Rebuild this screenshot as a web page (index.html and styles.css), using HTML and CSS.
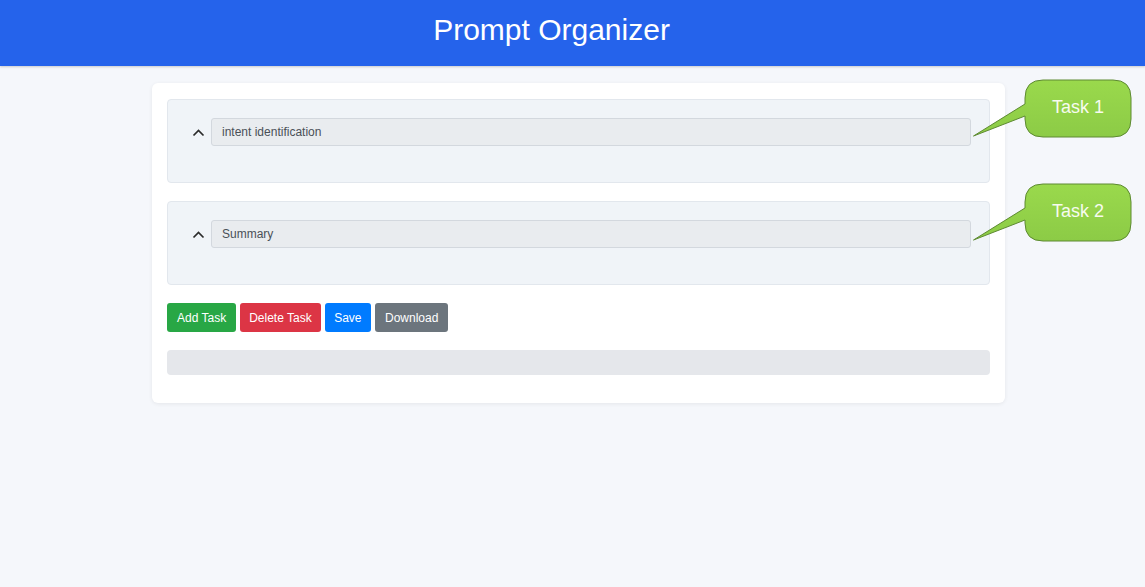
FILE: index.html
```html
<!DOCTYPE html>
<html>
<head>
<meta charset="utf-8">
<link rel="stylesheet" href="styles.css">
</head>
<body>
<header class="topbar"><h1 class="title">Prompt Organizer</h1></header>
<main class="page">
  <section class="card">
    <div class="task">
      <div class="task-head">
        <svg class="chev" width="13" height="9" viewBox="0 0 13 9"><polyline points="1.5,7.5 6.5,2.5 11.5,7.5" fill="none" stroke="#2b2b2b" stroke-width="1.7"/></svg>
        <div class="task-input">intent identification</div>
      </div>
    </div>
    <div class="task">
      <div class="task-head">
        <svg class="chev" width="13" height="9" viewBox="0 0 13 9"><polyline points="1.5,7.5 6.5,2.5 11.5,7.5" fill="none" stroke="#2b2b2b" stroke-width="1.7"/></svg>
        <div class="task-input">Summary</div>
      </div>
    </div>
    <div class="actions">
      <button class="btn btn-green">Add Task</button>
      <button class="btn btn-red">Delete Task</button>
      <button class="btn btn-blue">Save</button>
      <button class="btn btn-gray">Download</button>
    </div>
    <div class="output"></div>
  </section>
</main>
<div class="callout callout-1">
  <svg width="166" height="64" viewBox="0 0 166 64">
    <defs><linearGradient id="g1" x1="0" y1="0" x2="0" y2="1"><stop offset="0" stop-color="#9ad94c"/><stop offset="1" stop-color="#8ccb46"/></linearGradient></defs>
    <path d="M73 2 H143 Q161 2 161 20 V41 Q161 59 143 59 H73 Q55 59 55 41 V38 L3.5 58 L55 26 V20 Q55 2 73 2 Z" fill="url(#g1)" stroke="#5e8a33" stroke-width="1"/>
  </svg>
  <span class="callout-text">Task 1</span>
</div>
<div class="callout callout-2">
  <svg width="166" height="64" viewBox="0 0 166 64">
    <defs><linearGradient id="g2" x1="0" y1="0" x2="0" y2="1"><stop offset="0" stop-color="#9ad94c"/><stop offset="1" stop-color="#8ccb46"/></linearGradient></defs>
    <path d="M73 2 H143 Q161 2 161 20 V41 Q161 59 143 59 H73 Q55 59 55 41 V38 L3.5 58 L55 26 V20 Q55 2 73 2 Z" fill="url(#g2)" stroke="#5e8a33" stroke-width="1"/>
  </svg>
  <span class="callout-text">Task 2</span>
</div>
</body>
</html>
```
FILE: styles.css
```css
* { box-sizing: border-box; }
html, body { margin: 0; padding: 0; }
body {
  background: #f5f7fb;
  font-family: "Liberation Sans", Arial, sans-serif;
  width: 1145px;
  height: 587px;
  position: relative;
  overflow: hidden;
}
.topbar {
  height: 66px;
  background: #2563eb;
  display: flex;
  align-items: center;
  justify-content: center;
  padding-right: 42px;
  box-shadow: 0 1px 2px rgba(0,0,0,0.18);
}
.title {
  margin: 0;
  color: #fff;
  font-weight: normal;
  font-size: 30px;
  position: relative;
  top: -3px;
}
.page {
  padding: 17px 0 0 152px;
}
.card {
  width: 853px;
  background: #fff;
  border-radius: 6px;
  box-shadow: 0 1px 4px rgba(0,0,0,0.07);
  padding: 16px 15px 28px 15px;
}
.task {
  background: #f0f4f8;
  border: 1px solid #e2e7ed;
  border-radius: 4px;
  padding: 18px 18px 36px 24px;
  margin-bottom: 18px;
}
.task-head {
  display: flex;
  align-items: center;
  gap: 6px;
}
.chev { flex: none; margin-top: 1px; }
.task-input {
  flex: 1;
  height: 28px;
  background: #e9ecef;
  border: 1px solid #d3d8de;
  border-radius: 3px;
  padding: 0 10px;
  display: flex;
  align-items: center;
  font-size: 12px;
  color: #495057;
}
.actions {
  display: flex;
  gap: 4px;
}
.btn {
  height: 29px;
  border: none;
  border-radius: 3px;
  padding: 0 10px;
  font-family: "Liberation Sans", Arial, sans-serif;
  font-size: 12px;
  color: #fff;
}
.btn-red { padding: 0 9px; }
.btn-blue { padding: 0 9.5px; }
.btn-green { background: #28a745; }
.btn-red { background: #dc3545; }
.btn-blue { background: #007bff; }
.btn-gray { background: #6c757d; }
.output {
  margin-top: 18px;
  height: 25px;
  background: #e5e7eb;
  border-radius: 4px;
}
.callout {
  position: absolute;
  left: 970px;
  width: 166px;
  height: 64px;
}
.callout svg { display: block; }
.callout-1 { top: 78px; }
.callout-2 { top: 182px; }
.callout-text {
  position: absolute;
  left: 55px;
  width: 106px;
  top: 19px;
  text-align: center;
  color: #f7fbef;
  font-size: 18px;
}
```
